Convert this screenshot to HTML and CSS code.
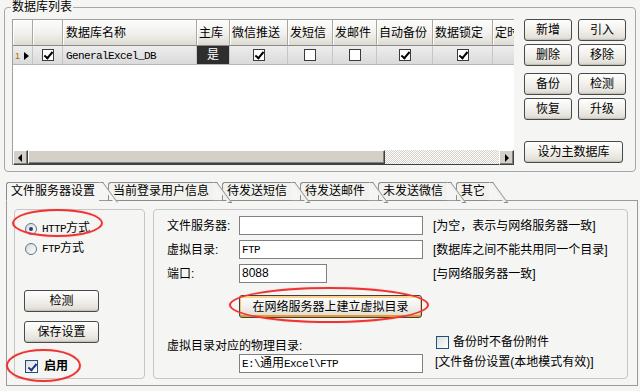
FILE: index.html
```html
<!DOCTYPE html>
<html lang="zh-CN">
<head>
    <meta charset="UTF-8">
    <title>数据库列表</title>
    <link rel="stylesheet" href="styles.css">
</head>
<body>
    <fieldset class="db-group">
        <legend>数据库列表</legend>
        <div class="db-grid">
            <table class="grid-table">
                <colgroup>
                    <col class="w-ind"><col class="w-chk"><col class="w-name"><col class="w-main">
                    <col class="w-wx"><col class="w-sms"><col class="w-mail"><col class="w-bak">
                    <col class="w-lock"><col class="w-time">
                </colgroup>
                <thead>
                    <tr>
                        <th></th>
                        <th></th>
                        <th>数据库名称</th>
                        <th>主库</th>
                        <th>微信推送</th>
                        <th>发短信</th>
                        <th>发邮件</th>
                        <th>自动备份</th>
                        <th>数据锁定</th>
                        <th>定时</th>
                    </tr>
                </thead>
                <tbody>
                    <tr>
                        <td class="cell-ind"><span class="row-no">1</span><span class="row-arrow"></span></td>
                        <td class="cell-center"><span class="chk grid-chk on"></span></td>
                        <td class="cell-name"><span class="mono">GeneralExcel_DB</span></td>
                        <td class="cell-main">是</td>
                        <td class="cell-center"><span class="chk grid-chk on"></span></td>
                        <td class="cell-center"><span class="chk grid-chk"></span></td>
                        <td class="cell-center"><span class="chk grid-chk"></span></td>
                        <td class="cell-center"><span class="chk grid-chk on"></span></td>
                        <td class="cell-center"><span class="chk grid-chk on"></span></td>
                        <td></td>
                    </tr>
                </tbody>
            </table>
            <div class="grid-empty"></div>
            <div class="hscroll">
                <span class="sb-btn sb-left"></span>
                <span class="sb-thumb"></span>
                <span class="sb-track"></span>
                <span class="sb-btn sb-right"></span>
            </div>
        </div>

        <div class="db-actions">
            <div class="btn-pair">
                <button class="btn">新增</button>
                <button class="btn">引入</button>
            </div>
            <div class="btn-pair sep">
                <button class="btn">删除</button>
                <button class="btn">移除</button>
            </div>
            <div class="btn-pair">
                <button class="btn">备份</button>
                <button class="btn">检测</button>
            </div>
            <div class="btn-pair">
                <button class="btn">恢复</button>
                <button class="btn">升级</button>
            </div>
            <button class="btn btn-wide">设为主数据库</button>
        </div>
    </fieldset>

    <div class="tabs">
        <div class="tab active">文件服务器设置</div>
        <div class="tab">当前登录用户信息</div>
        <div class="tab">待发送短信</div>
        <div class="tab">待发送邮件</div>
        <div class="tab">未发送微信</div>
        <div class="tab">其它</div>
    </div>

    <div class="tab-panel">
        <div class="box box-mode">
            <label class="opt">
                <span class="radio on"></span><span><span class="mono">HTTP</span>方式</span>
            </label>
            <label class="opt opt-ftp">
                <span class="radio"></span><span><span class="mono">FTP</span>方式</span>
            </label>
            <button class="btn btn-side btn-check">检测</button>
            <button class="btn btn-side btn-save">保存设置</button>
            <label class="opt opt-enable">
                <span class="chk blue on"></span><strong>启用</strong>
            </label>
            <span class="mark mark-http"></span>
            <span class="mark mark-enable"></span>
        </div>

        <div class="box box-server">
            <div class="field-row">
                <span class="field-label">文件服务器:</span>
                <div class="textbox"></div>
                <span class="field-note">[为空，表示与网络服务器一致]</span>
            </div>
            <div class="field-row">
                <span class="field-label">虚拟目录:</span>
                <div class="textbox"><span class="mono">FTP</span></div>
                <span class="field-note">[数据库之间不能共用同一个目录]</span>
            </div>
            <div class="field-row">
                <span class="field-label">端口:</span>
                <div class="textbox textbox-short">8088</div>
                <span class="field-note">[与网络服务器一致]</span>
            </div>
            <div class="create-row">
                <div class="btn-wrap">
                    <button class="btn btn-hover">在网络服务器上建立虚拟目录</button>
                    <span class="mark mark-create"></span>
                </div>
            </div>
            <div class="phys-row">
                <div class="phys-left">
                    <div class="phys-label">虚拟目录对应的物理目录:</div>
                    <div class="textbox phys-box"><span class="mono">E:\</span>通用<span class="mono">Excel\FTP</span></div>
                </div>
                <div class="phys-right">
                    <label class="opt">
                        <span class="chk blue"></span><span>备份时不备份附件</span>
                    </label>
                    <div class="phys-note">[文件备份设置(本地模式有效)]</div>
                </div>
            </div>
        </div>
    </div>
</body>
</html>
```

FILE: styles.css
```css
* {
    margin: 0;
    padding: 0;
    box-sizing: border-box;
}

body {
    font-family: "Liberation Sans", "Noto Sans CJK SC", sans-serif;
    font-size: 12px;
    line-height: 14px;
    color: #000;
    background: #f5f5f3;
    width: 640px;
    height: 391px;
    overflow: hidden;
}

.mono {
    font-family: "Liberation Mono", "Noto Sans CJK SC", monospace;
    font-size: 11px;
    letter-spacing: -0.6px;
}

/* ---- database list group ---- */

.db-group {
    margin: 0 4px;
    height: 172px;
    border: 1px solid #a8a8a8;
    border-radius: 4px;
    padding: 5px 8px 6px 7px;
    display: flex;
    gap: 10px;
    min-width: 0;
}

.db-group legend {
    padding: 0 1px;
    margin-left: -1px;
    line-height: 14px;
}

.db-grid {
    width: 502px;
    flex: none;
    display: flex;
    flex-direction: column;
    background: #fff;
    border-top: 1px solid #a0a0a0;
    border-left: 1px solid #a0a0a0;
    overflow: hidden;
}

.grid-table {
    table-layout: fixed;
    width: 501px;
    border-collapse: separate;
    border-spacing: 0;
}

.w-ind { width: 20px; }
.w-chk { width: 30px; }
.w-name { width: 134px; }
.w-main { width: 33px; }
.w-wx { width: 58px; }
.w-sms { width: 45px; }
.w-mail { width: 44px; }
.w-bak { width: 56px; }
.w-lock { width: 60px; }
.w-time { width: 21px; }

.grid-table th {
    height: 26px;
    padding: 0 2px;
    text-align: left;
    font-weight: normal;
    white-space: nowrap;
    overflow: hidden;
    border-right: 1px solid #a9a7a0;
    border-bottom: 1px solid #8a8985;
    background: linear-gradient(#fdfdfc, #f1f0ec 55%, #dddbd3);
    box-shadow: inset 1px 0 0 #fff;
}

.grid-table th:nth-child(3) {
    padding-left: 3px;
}

.grid-table th:last-child {
    border-right: none;
    text-overflow: clip;
}

.grid-table td {
    height: 19px;
    padding: 0;
    border-right: 1px solid #c6c6c6;
    border-bottom: 1px solid #b5b5b5;
    background: linear-gradient(#ededed, #dadada);
    white-space: nowrap;
    overflow: hidden;
}

.grid-table td:last-child {
    border-right: none;
}

.row-no {
    font-size: 9px;
    color: #b46a00;
    margin-left: 2px;
}

.row-arrow {
    display: inline-block;
    margin-left: 4px;
    border-left: 5px solid #000;
    border-top: 4px solid transparent;
    border-bottom: 4px solid transparent;
    vertical-align: -1px;
}

.cell-center {
    text-align: center;
}

.grid-table td.cell-name {
    padding-left: 3px;
}

.grid-table td.cell-main {
    background: #2e2e2e;
    color: #fff;
    text-align: center;
}

.chk {
    display: inline-block;
    position: relative;
    width: 13px;
    height: 13px;
    background: #fff;
    border: 1px solid #555;
    vertical-align: middle;
    flex: none;
}

.grid-chk {
    width: 12px;
    height: 12px;
    border-color: #3a3a3a;
    vertical-align: -2px;
}

.chk.on::after {
    content: "";
    position: absolute;
    left: 3px;
    top: 0;
    width: 3px;
    height: 7px;
    border: solid #000;
    border-width: 0 2px 2px 0;
    transform: rotate(40deg);
}

.chk.blue {
    border-color: #1c5180;
    background: linear-gradient(135deg, #dcdcd7, #fff);
}

.chk.blue.on::after {
    border-color: #21308f;
    left: 4px;
    top: 1px;
}

.grid-empty {
    flex: 1;
}

.hscroll {
    display: flex;
    height: 15px;
    background: #d4d0c8;
    border-bottom: 1px solid #404040;
}

.sb-btn {
    position: relative;
    width: 15px;
    height: 15px;
    flex: none;
    background: #d4d0c8;
    border: 1px solid;
    border-color: #fff #404040 #404040 #fff;
    box-shadow: inset -1px -1px 0 #808080;
}

.sb-btn::after {
    content: "";
    position: absolute;
    top: 3px;
    border-top: 4px solid transparent;
    border-bottom: 4px solid transparent;
}

.sb-left::after {
    left: 4px;
    border-right: 4px solid #000;
}

.sb-right::after {
    left: 5px;
    border-left: 4px solid #000;
}

.sb-thumb {
    width: 357px;
    flex: none;
    background: #d4d0c8;
    border: 1px solid;
    border-color: #fff #404040 #404040 #fff;
    box-shadow: inset -1px -1px 0 #808080;
}

.sb-track {
    flex: 1;
    background: repeating-conic-gradient(#fff 0 25%, #d4d0c8 0 50%) 0 0 / 2px 2px;
}

/* ---- buttons ---- */

.btn {
    font: inherit;
    color: #000;
    height: 22px;
    border: 1px solid #4a4a4a;
    border-radius: 3px;
    background: linear-gradient(#fefefe, #f3f2ee 45%, #e4e2db 85%, #d3d0c7);
    box-shadow: inset 0 -1px 0 #c4c1b7;
    cursor: pointer;
}

.db-actions {
    width: 102px;
    flex: none;
    display: flex;
    flex-direction: column;
}

.btn-pair {
    display: flex;
    gap: 6px;
    margin-bottom: 3px;
}

.btn-pair.sep {
    margin-bottom: 7px;
}

.btn-pair .btn {
    width: 48px;
}

.btn-wide {
    width: 99px;
    margin-top: 18px;
}

/* ---- tabs ---- */

.tabs {
    display: flex;
    height: 19px;
    margin: 10px 0 -1px 6px;
    position: relative;
    z-index: 1;
}

.tab {
    position: relative;
    height: 19px;
    padding: 0 4px;
    margin-right: 9px;
    border: 1px solid #8c8c8c;
    border-right: none;
    border-radius: 3px 0 0 0;
    background: #f1f1ee;
    line-height: 17px;
    white-space: nowrap;
}

.tab::after {
    content: "";
    position: absolute;
    top: -1px;
    left: 100%;
    width: 3px;
    height: 19px;
    border-top: 1px solid #8c8c8c;
    border-right: 1px solid #8c8c8c;
    border-bottom: 1px solid #8c8c8c;
    background: inherit;
    transform: skewX(36deg);
    transform-origin: 0 0;
}

.tab:nth-child(1) { z-index: 6; }
.tab:nth-child(2) { z-index: 5; }
.tab:nth-child(3) { z-index: 4; }
.tab:nth-child(4) { z-index: 3; }
.tab:nth-child(5) { z-index: 2; }
.tab:nth-child(6) { z-index: 1; }

.tab.active {
    z-index: 10;
    background: #f5f5f3;
    border-bottom-color: #f5f5f3;
}

.tab.active::after {
    border-bottom-color: #f5f5f3;
}

.tab-panel {
    display: flex;
    gap: 8px;
    margin: 0 2px 0 6px;
    height: 186px;
    border: 1px solid #9a9a9a;
    padding: 8px 9px 0 7px;
}

.box {
    position: relative;
    height: 170px;
    border: 1px solid #c6c6c6;
    border-radius: 4px;
}

.box-mode {
    width: 131px;
    flex: none;
    display: flex;
    flex-direction: column;
    align-items: flex-start;
    padding: 12px 0 0 9px;
}

.opt {
    display: flex;
    align-items: center;
    gap: 5px;
    height: 13px;
    line-height: 13px;
    white-space: nowrap;
}

.box-mode .opt {
    margin-left: 1px;
}

.opt-ftp {
    margin-top: 7px;
}

.radio {
    position: relative;
    width: 12px;
    height: 12px;
    flex: none;
    border-radius: 50%;
    border: 1px solid #5a7590;
    background: linear-gradient(135deg, #d8d8d3, #fff);
}

.radio.on::after {
    content: "";
    position: absolute;
    left: 3px;
    top: 3px;
    width: 4px;
    height: 4px;
    border-radius: 50%;
    background: #22407f;
}

.btn-side {
    width: 75px;
}

.btn-check {
    margin-top: 35px;
}

.btn-save {
    margin-top: 9px;
}

.opt-enable {
    margin-top: 17px;
    gap: 6px;
}

.opt-enable strong {
    font-weight: bold;
}

.mark {
    position: absolute;
    border: 2px solid #ee3333;
    border-radius: 50%;
    box-shadow: 0 0 1px #f77;
    pointer-events: none;
}

.mark-http {
    left: -3px;
    top: -1px;
    width: 91px;
    height: 28px;
}

.mark-enable {
    left: -9px;
    top: 139px;
    width: 75px;
    height: 33px;
}

/* ---- file server settings ---- */

.box-server {
    flex: 1;
    padding: 6px 0 0 13px;
    display: flex;
    flex-direction: column;
}

.field-row {
    display: grid;
    grid-template-columns: 72px 184px auto;
    align-items: center;
    height: 19px;
    margin-bottom: 5px;
}

.field-row:nth-child(3) {
    margin-bottom: 0;
}

.field-note {
    margin-left: 10px;
    white-space: nowrap;
}

.textbox {
    height: 19px;
    border: 1px solid #808080;
    background: #fff;
    padding: 0 2px;
    line-height: 17px;
    white-space: nowrap;
}

.textbox-short {
    width: 88px;
}

.create-row {
    margin-top: 12px;
    padding-left: 72px;
}

.btn-wrap {
    position: relative;
    display: inline-block;
}

.btn-hover {
    width: 183px;
    height: 23px;
    border-color: #3f3f3f;
    box-shadow: inset 0 2px 0 #fcd28a, inset 0 -2px 0 #e69c2c, inset 1px 0 0 #f7c06a, inset -1px 0 0 #f7c06a;
}

.mark-create {
    left: -10px;
    top: -8px;
    width: 200px;
    height: 36px;
}

.phys-row {
    display: grid;
    grid-template-columns: 256px auto;
    column-gap: 10px;
    margin-top: 17px;
}

.phys-label {
    margin-top: 4px;
    white-space: nowrap;
}

.phys-box {
    margin: 1px 0 0 72px;
    width: 184px;
}

.phys-right {
    padding-left: 3px;
}

.phys-right .opt {
    height: 14px;
    gap: 4px;
}

.phys-note {
    margin-top: 6px;
    margin-left: -1px;
    white-space: nowrap;
}
```
